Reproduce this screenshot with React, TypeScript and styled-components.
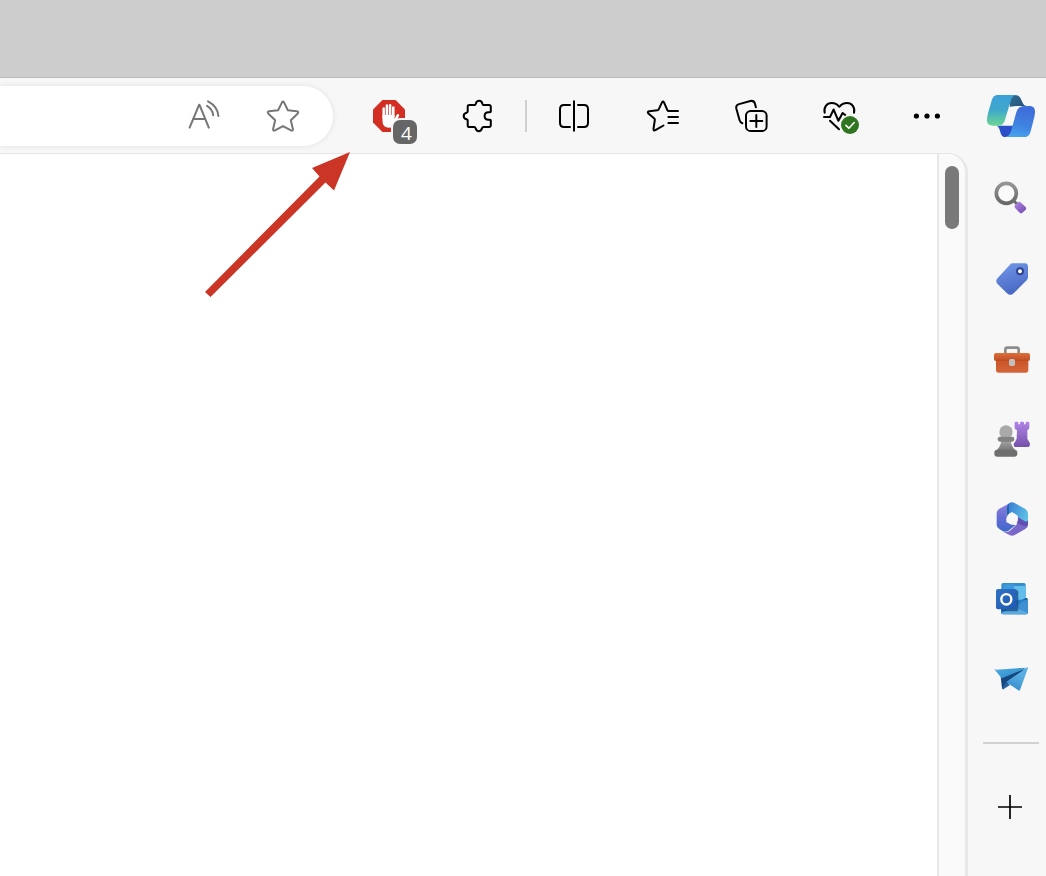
import React from "react";
import styled, { createGlobalStyle } from "styled-components";

const GlobalStyle = createGlobalStyle`
  * { box-sizing: border-box; }
  body { margin: 0; background: #f7f7f7; font-family: "Open Sans", "Noto Sans", sans-serif; }
`;

const Screen = styled.div`
  position: relative;
  display: flex;
  flex-direction: column;
  min-height: 100vh;
  overflow: hidden;
`;

const Desktop = styled.div`
  height: 78px;
  flex: none;
  background: #cdcdcd;
  border-bottom: 1px solid #b9b9b9;
`;

const BrowserWindow = styled.div`
  display: flex;
  flex: 1;
  background: #f7f7f7;
`;

const MainColumn = styled.div`
  display: flex;
  flex-direction: column;
  flex: 1;
  min-width: 0;
`;

const Toolbar = styled.header`
  display: flex;
  align-items: center;
  height: 75px;
  padding: 8px 14px 7px 0;
`;

const AddressBar = styled.div`
  display: flex;
  align-items: center;
  justify-content: flex-end;
  gap: 31px;
  flex: 1;
  height: 60px;
  margin-right: 32px;
  padding-right: 26px;
  background: #fff;
  border-radius: 0 30px 30px 0;
  box-shadow: 0 0 6px rgba(0, 0, 0, 0.09);
`;

const Tools = styled.div`
  display: flex;
  align-items: center;
  gap: 41px;
`;

const ToolDivider = styled.div`
  width: 2px;
  height: 32px;
  margin: 0 23px;
  background: #cfcfcf;
`;

const IconButton = styled.button<{ $color?: string }>`
  position: relative;
  display: block;
  flex: none;
  width: 48px;
  height: 48px;
  padding: 0;
  border: 0;
  background: none;
  color: ${(p) => p.$color ?? "#000"};
  font-family: inherit;
  cursor: pointer;

  svg { display: block; overflow: visible; }
`;

const Badge = styled.span`
  position: absolute;
  left: 28px;
  top: 28px;
  width: 24px;
  height: 24px;
  padding-left: 3px;
  border-radius: 7px;
  background: #666;
  box-shadow: 0 0 0 2px #f7f7f7;
  color: #fff;
  font-size: 19px;
  font-weight: 500;
  line-height: 27px;
  text-align: center;
`;

const Page = styled.main`
  display: flex;
  flex: 1;
  border-top: 1px solid #e6e6e6;
  border-right: 3px solid #e8e8e8;
  border-top-right-radius: 20px;
  background: #fafafa;
  overflow: hidden;
`;

const Document = styled.div`
  flex: 1;
  background: #fff;
`;

const ScrollTrack = styled.div`
  width: 28px;
  padding: 12px 6px;
  border-left: 2px solid #e6e6e6;
  background: #fafafa;
`;

const ScrollThumb = styled.div`
  width: 14px;
  height: 63px;
  border-radius: 7px;
  background: #797979;
`;

const Sidebar = styled.nav`
  display: flex;
  flex-direction: column;
  align-items: center;
  width: 78px;
  padding: 14px 0 0 8px;
`;

const SidebarApps = styled.div`
  display: flex;
  flex-direction: column;
  gap: 32px;
  margin-top: 35px;
`;

const SidebarDivider = styled.div`
  width: 56px;
  height: 2px;
  margin: 39px 0;
  background: #d2d2d2;
`;

const Arrow = styled.svg`
  position: absolute;
  left: 200px;
  top: 148px;
  pointer-events: none;
`;

const LINE_BOX = "-24 -24 48 48";

function LineIcon({ width = 2, children }: { width?: number; children: React.ReactNode }) {
  return (
    <svg width="48" height="48" viewBox={LINE_BOX} fill="none" stroke="currentColor" strokeWidth={width} strokeLinecap="round" strokeLinejoin="round" aria-hidden="true">
      {children}
    </svg>
  );
}

function ColorIcon({ box, children }: { box: string; children: React.ReactNode }) {
  return (
    <svg width="48" height="48" viewBox={box} aria-hidden="true">
      {children}
    </svg>
  );
}

function Gradient({ id, from, via, to, x2 = 0, y2 = 1 }: { id: string; from: string; via?: string; to: string; x2?: number; y2?: number }) {
  return (
    <linearGradient id={id} x1="0" y1="0" x2={x2} y2={y2}>
      <stop offset="0" stopColor={from} />
      {via && <stop offset="0.5" stopColor={via} />}
      <stop offset="1" stopColor={to} />
    </linearGradient>
  );
}

const ReadAloudIcon = () => (
  <LineIcon>
    <path d="M-14.4 11.6-4.9-11.2H-4.5L4.8 11.6M-11 3H1.4" />
    <path d="M4-14.6C10-11.4 14-6 14.4 0M3-10.2C6.5-8 8.8-5 9.2-.8" />
  </LineIcon>
);

const StarIcon = () => (
  <LineIcon>
    <path d="M-1-13.6Q0-15.2 1-13.6L4.9-5.8 13.8-4.7Q16.2-4.2 14.6-2.3L7.8 4.2 9.9 13Q10 15.3 8 14.4L0 10.1-8 14.4Q-10 15.3-9.9 13L-7.8 4.2-14.6-2.3Q-16.2-4.2-13.8-4.7L-4.9-5.8Z" />
  </LineIcon>
);

const AdBlockIcon = () => (
  <ColorIcon box={LINE_BOX}>
    <path fill="#d22f22" d="M-6.6-16H6.6L16-6.6V6.6L6.6 16H-6.6L-16 6.6V-6.6Z" />
    <path fill="none" stroke="#fff" strokeWidth="2.5" strokeLinecap="round" d="M-5.3 2V-7.5M-2.1 0V-10.4M1.1 0V-10.8M4.3 0V-8.6" />
    <path fill="#fff" d="M-6.5-1H5.5V3L7.3-.6Q8.400-2.500 9.700-1.700T9.400 1.200L5.800 8.200Q4 11.700 0 11.700-6.500 11.700-6.500 5Z" />
  </ColorIcon>
);

const PuzzleIcon = () => (
  <LineIcon>
    <path d="M-8.800-11H-3.200C-2.600-11-2.400-11.500-2.200-12.200-1.700-14.300-.5-15.200 1.100-15.200S3.900-14.300 4.400-12.200C4.600-11.500 4.800-11 5.400-11H10.900Q12.800-11 12.800-9V-4.400Q12.800-3.700 12-3.700H10.400Q6.600-3.700 6.600 0T10.400 3.700H12Q12.800 3.700 12.800 4.400V9Q12.800 11 10.900 11H5.400C4.800 11 4.300 11.500 4.100 12.100 3.500 14.300 2.300 15.300.8 15.300S-1.900 14.300-2.500 12.100C-2.700 11.500-3.100 11-3.700 11H-8.800Q-10.300 11-10.300 9.200V4.400C-10.300 3.700-10.800 3.500-11.500 3.300-13.300 2.800-14.300 1.600-14.300 0S-13.300-2.800-11.500-3.300C-10.800-3.500-10.300-3.700-10.300-4.400V-9.200Q-10.300-11-8.800-11Z" />
  </LineIcon>
);

const SplitIcon = () => (
  <LineIcon>
    <path d="M0-14.8V14.8M-4-11H-10Q-14-11-14-6.800V6.800Q-14 11-10 11H-4M4-11H10Q14-11 14-6.800V6.800Q14 11 10 11H4" />
  </LineIcon>
);

const FavoritesIcon = () => (
  <LineIcon>
    <path d="M15-5H5.8Q4.8-5 4.3-6L1-13.6Q0-15.4-1-13.6L-4.3-6.6Q-4.7-5.8-5.6-5.7L-13.8-4.7Q-16.2-4.2-14.6-2.4L-8.7 2.5Q-8 3.2-8.2 4.1L-9.5 13Q-9.6 15-7.6 14.1L.5 9.5M5.4 1H15M5.4 7H15" />
  </LineIcon>
);

const CollectionsIcon = () => (
  <LineIcon>
    <rect x="-6" y="-5" width="20.6" height="20" rx="4.6" />
    <path d="M4.3-1V11M-1.7 5H10.3" />
    <path d="M-9.6 7.2Q-11.7 6.6-12.4 4.2L-15.7-7.5Q-16.4-10.8-13-11.9L-1.6-15Q1.8-15.7 2.9-12.6L3.9-8.8" />
  </LineIcon>
);

const HealthIcon = () => (
  <LineIcon>
    <path d="M-16.3-3.2C-17.6-8.7-14.2-13-9.3-13-5.9-13-3.8-11.8-1.7-9.2.5-11.8 2.6-13 6-13 10.9-13 14.3-8.7 13-3.2M-17 1H-11L-7.4-6.5-2.6 4.8 1.6-3 4.2-1M-11 4.7-2 13.3" />
    <circle cx="9" cy="9" r="9" fill="#2f751f" stroke="none" />
    <path d="M4.9 9.4 7.9 12.2 13.2 6.5" stroke="#fff" strokeWidth="1.6" />
  </LineIcon>
);

const MoreIcon = () => (
  <ColorIcon box={LINE_BOX}>
    <circle cx="-13.6" cy="0" r="2.6" />
    <circle cx="-3" cy="0" r="2.6" />
    <circle cx="7.4" cy="0" r="2.6" />
  </ColorIcon>
);

const PlusIcon = () => (
  <svg width="48" height="48" viewBox={LINE_BOX} fill="none" stroke="currentColor" strokeWidth="1.7" aria-hidden="true">
    <path d="M-1-12V12M-13 0H11" />
  </svg>
);

const CopilotIcon = () => (
  <ColorIcon box="261 66 144 144">
    <defs>
      <Gradient id="cp-left" from="#3b9fd9" via="#40a9cb" to="#6cd692" />
      <Gradient id="cp-right" from="#3f6fda" via="#3f83e0" to="#4bacf2" x2={-0.2} />
      <Gradient id="cp-top" from="#2f7099" to="#285478" x2={1} y2={0.6} />
      <Gradient id="cp-bottom" from="#2b50cd" to="#2c4ec4" x2={1} />
    </defs>
    <path fill="url(#cp-top)" d="M325 75H345C369 75 362 107 380 108H349L330 110Z" />
    <path fill="url(#cp-bottom)" d="M287 167H344L335 185C331 197 323 201 315 201 296 201 305 168 287 167Z" />
    <path fill="url(#cp-left)" d="M293 75H350C338 76 334 86 331 96L315 149C311 164 303 167 290 167H278C258 167 259 151 264 130L274 95C278 81 283 75 293 75Z" />
    <path fill="url(#cp-right)" d="M375 201H315C327 200 331 190 334 180L349 127C354 112 362 108 377 108H388C408 108 407 125 402 145L393 180C389 195 384 201 375 201Z" />
  </ColorIcon>
);

const SearchIcon = () => (
  <ColorIcon box="261 315 144 144">
    <defs>
      <Gradient id="se-ring" from="#969696" to="#686868" />
      <Gradient id="se-handle" from="#b18be6" to="#7145ad" x2={1} />
    </defs>
    <path stroke="#666" strokeWidth="9" d="m339 390 12 12" />
    <circle cx="319" cy="370" r="30" fill="#fafafa" stroke="url(#se-ring)" strokeWidth="11" />
    <path fill="url(#se-handle)" d="M345 405 355 396Q359 394 363 398L377 411Q380 415 377 419L367 428Q363 431 359 428L346 415Q342 410 345 405Z" />
  </ColorIcon>
);

const ShoppingIcon = () => (
  <ColorIcon box="21 15 144 144">
    <defs><Gradient id="tag" from="#739ae9" to="#4a68c5" x2={0.3} /></defs>
    <path fill="url(#tag)" d="M98 40H135Q144 41 144 50V82Q144 87 140 91L101 130Q91 139 81 130L52 101Q45 92 53 84L90 44Q93 40 98 40Z" />
    <circle cx="120" cy="64" r="9" fill="#fff" stroke="#2d438f" strokeWidth="6" />
  </ColorIcon>
);

const ToolsIcon = () => (
  <ColorIcon box="21 255 144 144">
    <defs>
      <Gradient id="tb-lid" from="#e06f39" to="#bd4b23" />
      <Gradient id="tb-body" from="#c95427" to="#d46539" />
    </defs>
    <path fill="none" stroke="#8c8c8c" strokeWidth="8" d="M76 313V299Q76 293 83 293H109Q116 293 116 299V313" />
    <path fill="url(#tb-body)" d="M48 327H145V360Q145 368 137 368H56Q48 368 48 360Z" />
    <rect x="42" y="309" width="108" height="24" rx="6" fill="url(#tb-lid)" />
    <rect x="87" y="327" width="18" height="21" rx="5" fill="#c2c0be" />
  </ColorIcon>
);

const GamesIcon = () => (
  <ColorIcon box="21 15 144 144">
    <defs>
      <Gradient id="pawn" from="#b0b0b0" to="#777" />
      <Gradient id="rook" from="#b084e6" to="#7551aa" />
    </defs>
    <path fill="url(#rook)" d="M104 38Q104 35 107 35H111Q115 35 115 38V43H120V37Q120 35 123 35H128Q132 35 132 37V43H137V38Q137 35 140 35H144Q148 35 148 38V53Q148 58 142 60L142 86 148 97Q151 101 149 107 148 111 143 111H106Q101 111 101 105T105 96L110 86 111 60Q104 58 104 53Z" />
    <path fill="url(#pawn)" d="M64 84H92Q91 106 106 121H50Q65 106 64 84Z" />
    <circle cx="78" cy="66" r="20" fill="#a9a9a9" />
    <rect x="53" y="80" width="50" height="15" rx="7" fill="#828282" />
    <rect x="43" y="119" width="69" height="21" rx="9" fill="#6e6e6e" />
  </ColorIcon>
);

const Microsoft365Icon = () => (
  <ColorIcon box="21 255 144 144">
    <defs>
      <Gradient id="ms-left" from="#9186df" via="#656cd3" to="#3d69cc" />
      <Gradient id="ms-top" from="#3476d1" to="#5fc0e6" x2={1} y2={0.4} />
      <Gradient id="ms-bottom" from="#6746b0" to="#bb88de" x2={-1} y2={0.5} />
      <Gradient id="ms-base" from="#7a67ca" to="#b886dd" x2={-1} y2={0.5} />
    </defs>
    <path fill="url(#ms-left)" d="M91 278 58 296Q50 301 50 309V344Q50 352 58 357L68 363Q82 369 91 358L106 346 79 337V302Q79 292 91 278Z" />
    <path fill="url(#ms-top)" d="M88 279Q96 275 104 279L136 297Q144 302 144 311V342Q144 348 138 354L113 333V317L96 306 80 315V299Q80 285 88 279Z" />
    <path fill="url(#ms-base)" d="M144 331V345Q144 352 136 357L104 375Q96 379 88 375L66 363Q83 370 92 361L112 341 113 322 137 335Q141 337 144 331Z" />
    <path fill="#493d9b" d="M113 322 137 335Q141 337 144 331V345L136 349 109 340Z" opacity="0.55" />
    <path fill="#174a9a" opacity="0.6" d="M79 325V301Q80 288 87 281V311L80 325Z" />
    <circle cx="97" cy="327" r="17" fill="#f7f7f7" />
  </ColorIcon>
);

const OutlookIcon = () => (
  <ColorIcon box="21 15 144 144">
    <defs><Gradient id="ol-tile" from="#2f72c6" to="#2059b0" x2={1} /></defs>
    <rect x="64" y="39" width="73" height="92" rx="5" fill="#368dce" />
    <path fill="#62bfeb" d="M101 48H137V92H101Z" />
    <path fill="#3b9bdb" d="M71 43H101V65H71Z" />
    <path fill="#0c4280" d="M114 96 138 84Q144 84 144 90L112 108Z" />
    <path fill="#2b7fc8" d="M63 92 144 88V127Q144 133 138 133H69Q63 133 63 127Z" />
    <path fill="#3f8fd3" d="M63 132 144 87V127Q144 133 138 133Z" />
    <path fill="#5aaae0" d="m102 110 42 20Q141 133 138 133H69Q65 133 63 130Z" />
    <path fill="#134775" opacity="0.7" d="M64 60H109Q115 60 115 66V118Q115 124 109 124H64Z" />
    <rect x="48" y="57" width="62" height="61" rx="6" fill="url(#ol-tile)" />
    <ellipse cx="79" cy="88" rx="15" ry="15.500" fill="none" stroke="#fff" strokeWidth="7" />
  </ColorIcon>
);

const DropIcon = () => (
  <ColorIcon box="21 255 144 144">
    <defs>
      <Gradient id="dr-wing" from="#51adde" to="#2387cc" x2={1} />
      <Gradient id="dr-right" from="#58aee2" to="#277cc4" x2={-0.5} />
    </defs>
    <path fill="#17477d" d="M62 320 136 296 80 345 71 357Q68 359 66 354Z" />
    <path fill="url(#dr-wing)" d="M46 298Q41 296 45 300L65 325Q99 312 140 293L48 299Z" />
    <path fill="url(#dr-right)" d="M142 292Q145 292 143 297L120 360Q117 364 114 360L78 336Z" />
    <path fill="#245f9e" d="m77 337 13 8-19 12Q68 359 67 354Z" />
  </ColorIcon>
);

const sidebarApps = [
  { label: "Search", Icon: SearchIcon },
  { label: "Shopping", Icon: ShoppingIcon },
  { label: "Tools", Icon: ToolsIcon },
  { label: "Games", Icon: GamesIcon },
  { label: "Microsoft 365", Icon: Microsoft365Icon },
  { label: "Outlook", Icon: OutlookIcon },
  { label: "Drop", Icon: DropIcon },
];

export default function App() {
  return (
    <Screen>
      <GlobalStyle />
      <Desktop />
      <BrowserWindow>
        <MainColumn>
          <Toolbar>
            <AddressBar>
              <IconButton $color="#767676" aria-label="Read aloud"><ReadAloudIcon /></IconButton>
              <IconButton $color="#767676" aria-label="Add to favorites"><StarIcon /></IconButton>
            </AddressBar>
            <Tools>
              <IconButton aria-label="Ad blocker, 4 blocked"><AdBlockIcon /><Badge>4</Badge></IconButton>
              <IconButton aria-label="Extensions"><PuzzleIcon /></IconButton>
            </Tools>
            <ToolDivider />
            <Tools>
              <IconButton aria-label="Split screen"><SplitIcon /></IconButton>
              <IconButton aria-label="Favorites"><FavoritesIcon /></IconButton>
              <IconButton aria-label="Collections"><CollectionsIcon /></IconButton>
              <IconButton aria-label="Browser essentials"><HealthIcon /></IconButton>
              <IconButton aria-label="Settings and more"><MoreIcon /></IconButton>
            </Tools>
          </Toolbar>
          <Page>
            <Document />
            <ScrollTrack><ScrollThumb /></ScrollTrack>
          </Page>
        </MainColumn>
        <Sidebar aria-label="Sidebar">
          <IconButton aria-label="Copilot"><CopilotIcon /></IconButton>
          <SidebarApps>
            {sidebarApps.map(({ label, Icon }) => (
              <IconButton key={label} aria-label={label}><Icon /></IconButton>
            ))}
          </SidebarApps>
          <SidebarDivider />
          <IconButton aria-label="Customize sidebar"><PlusIcon /></IconButton>
        </Sidebar>
      </BrowserWindow>
      <Arrow width="154" height="154" viewBox="200 148 154 154" aria-hidden="true">
        <path fill="#cb3525" d="M350 152 312 168 319.5 176.5 205 292 210.5 297 325.5 182.5 334 190.5Z" />
      </Arrow>
    </Screen>
  );
}
